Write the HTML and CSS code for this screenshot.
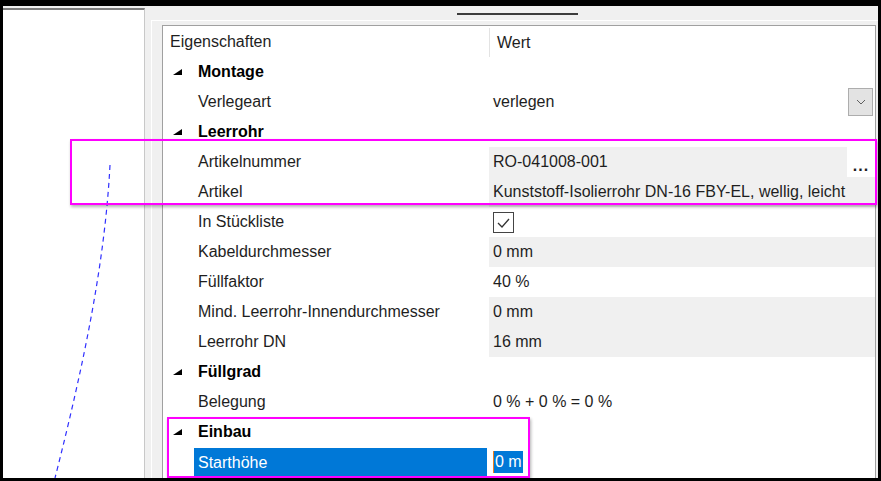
FILE: index.html
```html
<!DOCTYPE html>
<html lang="de">
<head>
  <meta charset="UTF-8">
  <title>Eigenschaften</title>
  <link rel="stylesheet" href="styles.css">
</head>
<body>
  <div class="frame">
    <div class="left-panel">
      <!-- Kabelweg im Zeichenbereich -->
      <svg class="curve" width="141" height="468" viewBox="3 10 141 468">
        <path d="M110,165 C105,260 85,360 55,478" fill="none" stroke="#3030ff" stroke-width="1.2" stroke-dasharray="5 4"/>
      </svg>
    </div>

    <div class="right-panel">
      <div class="tabstrip"><span class="tab-mark"></span></div>
      <div class="tabpage">
        <div class="grid">
          <div class="row head">
            <div class="name">Eigenschaften</div>
            <div class="value">Wert</div>
          </div>

          <div class="row cat">
            <div class="name"><svg class="tri" width="9" height="6" viewBox="0 0 9 6"><polygon points="0,6 9,0 9,6"/></svg>Montage</div>
          </div>
          <div class="row">
            <div class="name">Verlegeart</div>
            <div class="value combo-cell">
              <span>verlegen</span>
              <span class="combo"><svg width="10" height="6" viewBox="0 0 10 6"><path d="M1,1 L5,5 L9,1" fill="none" stroke="#606060" stroke-width="1"/></svg></span>
            </div>
          </div>

          <div class="row cat">
            <div class="name"><svg class="tri" width="9" height="6" viewBox="0 0 9 6"><polygon points="0,6 9,0 9,6"/></svg>Leerrohr</div>
          </div>
          <div class="row">
            <div class="name">Artikelnummer</div>
            <div class="value dots-cell">
              <span class="ro-text">RO-041008-001</span>
              <span class="dots">...</span>
            </div>
          </div>
          <div class="row">
            <div class="name">Artikel</div>
            <div class="value ro">Kunststoff-Isolierrohr DN-16 FBY-EL, wellig, leicht</div>
          </div>
          <div class="row">
            <div class="name">In Stückliste</div>
            <div class="value">
              <svg class="check" width="21" height="21" viewBox="0 0 21 21">
                <rect x="0.5" y="0.5" width="20" height="20" fill="#fff" stroke="#444"/>
                <path d="M5,11 L9,15 L16,7" fill="none" stroke="#333" stroke-width="1.3"/>
              </svg>
            </div>
          </div>
          <div class="row">
            <div class="name">Kabeldurchmesser</div>
            <div class="value ro">0 mm</div>
          </div>
          <div class="row">
            <div class="name">Füllfaktor</div>
            <div class="value">40 %</div>
          </div>
          <div class="row">
            <div class="name">Mind. Leerrohr-Innendurchmesser</div>
            <div class="value ro">0 mm</div>
          </div>
          <div class="row">
            <div class="name">Leerrohr DN</div>
            <div class="value ro">16 mm</div>
          </div>

          <div class="row cat">
            <div class="name"><svg class="tri" width="9" height="6" viewBox="0 0 9 6"><polygon points="0,6 9,0 9,6"/></svg>Füllgrad</div>
          </div>
          <div class="row">
            <div class="name">Belegung</div>
            <div class="value">0 % + 0 % = 0 %</div>
          </div>

          <div class="row cat">
            <div class="name"><svg class="tri" width="9" height="6" viewBox="0 0 9 6"><polygon points="0,6 9,0 9,6"/></svg>Einbau</div>
          </div>
          <div class="row active">
            <div class="name"><span class="sel">Starthöhe</span></div>
            <div class="value"><span class="edit">0 m</span></div>
          </div>
        </div>
      </div>
    </div>
  </div>

  <!-- Markierungen -->
  <div class="mark mark-artikel"></div>
  <div class="mark mark-einbau"></div>
</body>
</html>
```

FILE: styles.css
```css
body {
  margin: 0;
  padding: 6px 3px 3px 3px;
  background-color: #000; /* Bildschirmrahmen */
  font-family: "Liberation Sans", Arial, sans-serif;
  font-size: 16px;
  color: #1e1e1e;
  overflow: hidden;
}

.frame {
  width: 875px;
  height: 472px;
  background-color: #f0f0f0;
  display: flex;
  overflow: hidden;
}

.left-panel {
  width: 141px;
  margin-top: 2px;
  background-color: #ffffff;
  border-top: 2px solid #7c7c7c;
  border-right: 1px solid #c8c8c8;
  overflow: hidden;
}

.curve {
  display: block;
}

.right-panel {
  flex: 1;
  margin-left: 6px;
  display: flex;
  flex-direction: column;
}

.tabstrip {
  height: 14px;
}

.tab-mark {
  display: block;
  width: 121px;
  height: 2px;
  margin: 7px 0 0 306px;
  background-color: #3c3c3c;
}

.tabpage {
  flex: 1;
  border-top: 1px solid #ffffff;
  border-left: 1px solid #ffffff;
  padding: 4px 2px 0 10px;
  display: flex;
}

.grid {
  flex: 1;
  background-color: #ffffff;
  border: 1px solid #a0a0a0;
  border-bottom: none;
}

.row {
  display: grid;
  grid-template-columns: 326px 1fr;
  grid-template-rows: 30px;
  height: 30px;
}

.row .name {
  padding-left: 35px;
  display: flex;
  align-items: center;
  white-space: nowrap;
}

.row .value {
  padding-left: 4px;
  display: flex;
  align-items: center;
  white-space: nowrap;
}

.row.head {
  height: 31px;
  grid-template-rows: 31px;
}

.row.head .name {
  padding-left: 7px;
}

.row.head .value {
  margin: 2px 0 0 0;
  padding-left: 7px;
  border-left: 1px solid #e3e3e3;
}

.row.cat .name {
  padding-left: 10px;
  font-weight: bold;
  color: #000;
}

.tri {
  margin-right: 16px;
  margin-top: -1px;
}

.ro {
  background-color: #f0f0f0;
}

.combo-cell {
  justify-content: space-between;
}

.combo {
  width: 23px;
  height: 26px;
  margin-right: 2px;
  background-color: #e3e3e3;
  border: 1px solid #adadad;
  display: flex;
  align-items: center;
  justify-content: center;
}

.row .dots-cell {
  padding-left: 0;
  align-items: stretch;
}

.ro-text {
  flex: 1;
  background-color: #f0f0f0;
  padding-left: 4px;
  display: flex;
  align-items: center;
}

.dots {
  width: 28px;
  padding-top: 7px;
  text-align: center;
  font-weight: bold;
  letter-spacing: 1px;
  line-height: 23px;
}

.check {
  display: block;
}

.row.active .name {
  padding-left: 31px;
  align-items: stretch;
}

.sel {
  flex: 1;
  margin: 1px 2px 0 0;
  padding-left: 4px;
  background-color: #0078d7;
  color: #ffffff;
  display: flex;
  align-items: center;
}

.edit {
  background-color: #0078d7;
  color: #ffffff;
  border-left: 1px solid #f08020;
  padding: 0 1px;
  line-height: 22px;
}

.mark {
  position: absolute;
  box-sizing: border-box;
  border: 2px solid #ff00ff;
  box-shadow: 1px 2px 3px rgba(0, 0, 0, 0.3);
}

.mark-artikel {
  left: 70px;
  top: 139px;
  width: 807px;
  height: 66px;
}

.mark-einbau {
  left: 167px;
  top: 417px;
  width: 363px;
  height: 61px;
}
```
